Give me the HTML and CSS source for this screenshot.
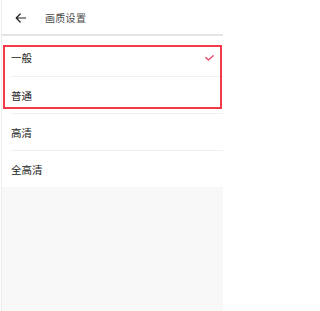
FILE: index.html
```html
<!DOCTYPE html>
<html lang="zh-CN">
<head>
<meta charset="utf-8">
<title>画质设置</title>
<link rel="stylesheet" href="styles.css">
</head>
<body>
<div class="page">
  <header class="topbar">
    <svg class="back" width="11" height="10" viewBox="0 0 11 10" aria-hidden="true">
      <path d="M10.5 5H1.2M5.2 1L1.2 5l4 4" fill="none" stroke="#222" stroke-width="1.2" stroke-linecap="round" stroke-linejoin="round"/>
    </svg>
    <span class="title">画质设置</span>
  </header>
  <ul class="list">
    <li class="row"><span>一般</span>
      <svg class="check" width="9" height="6" viewBox="0 0 9 6" aria-hidden="true">
        <path d="M0.8 2.4L3.4 5 8.2 0.8" fill="none" stroke="#e94b6a" stroke-width="1.4" stroke-linecap="round" stroke-linejoin="round"/>
      </svg>
    </li>
    <li class="row"><span>普通</span></li>
    <li class="row"><span>高清</span></li>
    <li class="row"><span>全高清</span></li>
  </ul>
  <div class="highlight"></div>
</div>
</body>
</html>
```
FILE: styles.css
```css
html, body {
  margin: 0;
  padding: 0;
  background: #ffffff;
}
body {
  width: 223px;
  height: 311px;
  overflow: hidden;
  font-family: "Noto Sans CJK SC", "Noto Sans", sans-serif;
}
.page {
  position: relative;
  margin-left: 1px;
  border-left: 1px solid #ececec;
  height: 311px;
  background: #f8f8f8;
  display: flex;
  flex-direction: column;
}
.topbar {
  height: 34px;
  background: #ffffff;
  border-bottom: 2px solid #e4e4e4;
  display: flex;
  align-items: center;
  padding-left: 13px;
}
.back {
  display: block;
  margin-top: 1px;
}
.title {
  margin-left: 19px;
  font-size: 10px;
  color: #4a4a4a;
  letter-spacing: 0.3px;
}
.list {
  list-style: none;
  margin: 0;
  padding: 3px 0 0 9px;
  background: #ffffff;
}
.row {
  box-sizing: border-box;
  height: 37px;
  display: flex;
  align-items: center;
  justify-content: space-between;
  padding-right: 9px;
  font-size: 10.5px;
  color: #222222;
}
.row + .row {
  border-top: 1px solid #f0f0f0;
}
.check {
  display: block;
}
.highlight {
  position: absolute;
  left: 1px;
  top: 45px;
  width: 219px;
  height: 64px;
  box-sizing: border-box;
  border: 2px solid #f23a4a;
}
```
